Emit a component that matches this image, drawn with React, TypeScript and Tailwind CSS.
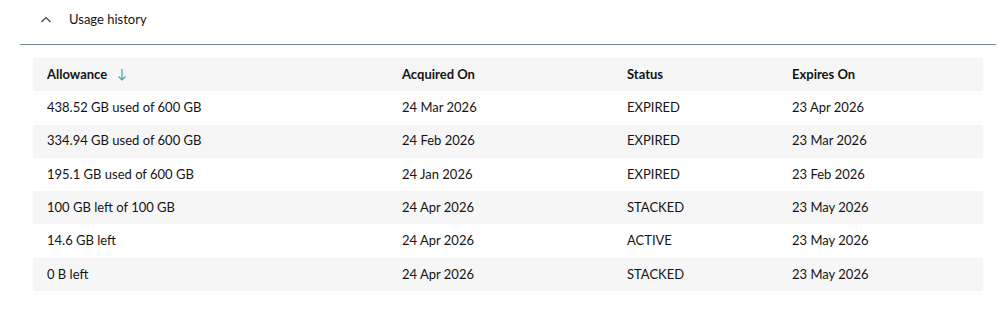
const rows = [
  { allowance: "438.52 GB used of 600 GB", acquired: "24 Mar 2026", status: "EXPIRED", expires: "23 Apr 2026" },
  { allowance: "334.94 GB used of 600 GB", acquired: "24 Feb 2026", status: "EXPIRED", expires: "23 Mar 2026" },
  { allowance: "195.1 GB used of 600 GB", acquired: "24 Jan 2026", status: "EXPIRED", expires: "23 Feb 2026" },
  { allowance: "100 GB left of 100 GB", acquired: "24 Apr 2026", status: "STACKED", expires: "23 May 2026" },
  { allowance: "14.6 GB left", acquired: "24 Apr 2026", status: "ACTIVE", expires: "23 May 2026" },
  { allowance: "0 B left", acquired: "24 Apr 2026", status: "STACKED", expires: "23 May 2026" },
];

const cols = "grid grid-cols-[355px_225px_165px_1fr] items-center h-[33.3px] px-[14px]";

export default function App() {
  return (
    <main className="bg-white min-h-[311px] text-[#141414] text-[13px] font-['Lato',sans-serif]">
      <div className="ml-[20px] w-[976px]">
        <div className="flex items-center h-[45px] border-b border-[#6f8a8c] pl-[20px] pb-[4px]">
          <svg width="12" height="12" viewBox="0 0 12 12" className="text-[#444]">
            <path d="M1.5 8 L6 3.5 L10.5 8" fill="none" stroke="currentColor" strokeWidth="1.2" />
          </svg>
          <span className="ml-[17px]">Usage history</span>
        </div>

        <div className="mx-[13px] mt-[13px]">
          <div className={`${cols} bg-[#f6f6f6] font-bold`}>
            <div className="flex items-center gap-[10px]">
              Allowance
              <svg width="10" height="14" viewBox="0 0 10 14" className="text-[#5a9aa6]">
                <path d="M5 1 V12 M1.5 8.5 L5 12 L8.5 8.5" fill="none" stroke="currentColor" strokeWidth="1.2" />
              </svg>
            </div>
            <div>Acquired On</div>
            <div>Status</div>
            <div>Expires On</div>
          </div>
          {rows.map((r, i) => (
            <div key={i} className={`${cols} ${i % 2 === 1 ? "bg-[#f6f6f6]" : "bg-white"}`}>
              <div>{r.allowance}</div>
              <div>{r.acquired}</div>
              <div>{r.status}</div>
              <div>{r.expires}</div>
            </div>
          ))}
        </div>
      </div>
    </main>
  );
}
